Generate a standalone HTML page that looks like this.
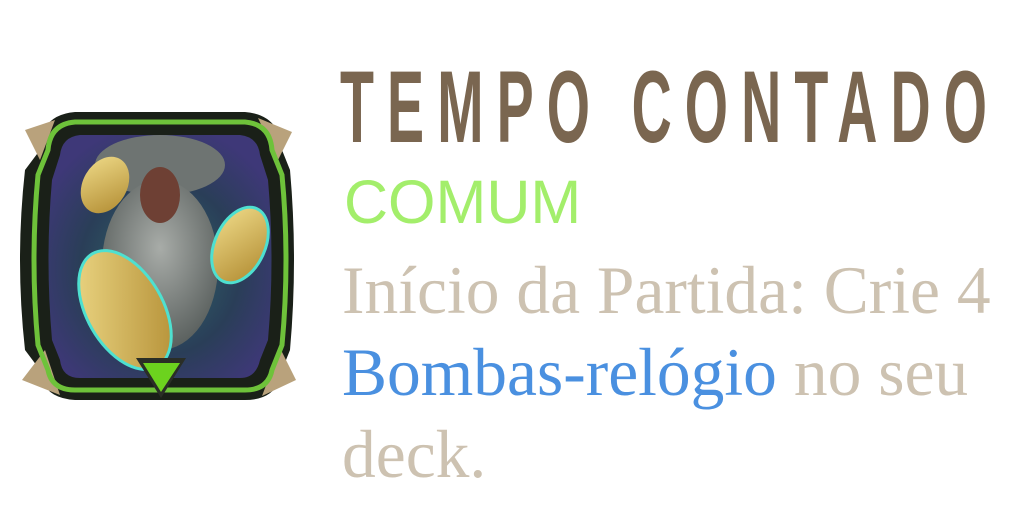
<!DOCTYPE html>
<html><head><meta charset="utf-8"><style>
html,body{margin:0;padding:0;background:#fff;width:1024px;height:512px;overflow:hidden;position:relative}
.t{position:absolute;left:340px;top:52px;font-family:"Liberation Sans",sans-serif;font-weight:bold;font-size:102px;color:#7a6650;letter-spacing:24px;line-height:110px;white-space:nowrap;transform:scaleX(0.545);transform-origin:0 0}
.c{position:absolute;left:344px;top:168px;font-family:"Liberation Sans",sans-serif;font-size:61px;color:#a3ee6b;line-height:68px}
.b{position:absolute;left:342px;top:250px;width:670px;font-family:"Liberation Serif",serif;font-size:67.5px;line-height:82px;color:#cdc2b1}
.b span{color:#4a90e0}
</style></head><body>
<svg width="320" height="420" style="position:absolute;left:0;top:0" viewBox="0 0 320 420">
<defs>
<radialGradient id="bg" cx="50%" cy="55%" r="60%"><stop offset="0" stop-color="#2f6a6a"/><stop offset="0.6" stop-color="#2a3e58"/><stop offset="1" stop-color="#3e3878"/></radialGradient>
<linearGradient id="coin" x1="0" y1="0" x2="1" y2="1"><stop offset="0" stop-color="#f0dc8a"/><stop offset="1" stop-color="#b08a30"/></linearGradient>
<radialGradient id="beard" cx="50%" cy="40%" r="60%"><stop offset="0" stop-color="#a8aca8"/><stop offset="1" stop-color="#5a605e"/></radialGradient>
</defs>
<path d="M40 150 Q40 115 75 112 L245 112 Q280 115 282 150 L290 170 Q298 260 290 350 L282 370 Q278 400 245 400 L75 400 Q42 398 40 370 L25 350 Q15 260 25 170 Z" fill="#1a2018"/>
<path d="M25 130 L55 120 L40 160 Z M258 118 L292 132 L278 160 Z M22 380 L60 395 L45 350 Z M262 396 L296 380 L280 348 Z" fill="#b9a27c"/>
<path d="M75 122 L245 122 Q270 124 272 150 L282 175 Q290 260 282 345 L272 370 Q268 390 245 390 L75 390 Q52 390 48 370 L38 345 Q30 260 38 175 L48 150 Q50 124 75 122 Z" fill="none" stroke="#6ec23a" stroke-width="5"/>
<path d="M80 135 L240 135 Q258 137 260 155 L268 180 Q275 260 268 340 L260 360 Q256 378 240 378 L80 378 Q62 378 60 360 L52 340 Q45 260 52 180 L60 155 Q62 137 80 135 Z" fill="url(#bg)"/>
<ellipse cx="160" cy="165" rx="65" ry="30" fill="#6e7472"/>
<ellipse cx="160" cy="265" rx="58" ry="85" fill="url(#beard)"/>
<ellipse cx="160" cy="195" rx="20" ry="28" fill="#6e4034"/>
<ellipse cx="105" cy="185" rx="22" ry="30" fill="url(#coin)" transform="rotate(30 105 185)"/>
<ellipse cx="240" cy="245" rx="25" ry="40" fill="url(#coin)" stroke="#4ee0d0" stroke-width="3" transform="rotate(25 240 245)"/>
<ellipse cx="125" cy="310" rx="38" ry="65" fill="url(#coin)" stroke="#4ee0d0" stroke-width="3" transform="rotate(-30 125 310)"/>
<path d="M136 358 L186 358 L161 398 Z" fill="#2a2e26"/>
<path d="M143 363 L180 363 L161 392 Z" fill="#6cd21e"/>
</svg>
<div class="t">TEMPO CONTADO</div>
<div class="c">COMUM</div>
<div class="b">Início da Partida: Crie 4 <span>Bombas-relógio</span> no seu deck.</div>
</body></html>
